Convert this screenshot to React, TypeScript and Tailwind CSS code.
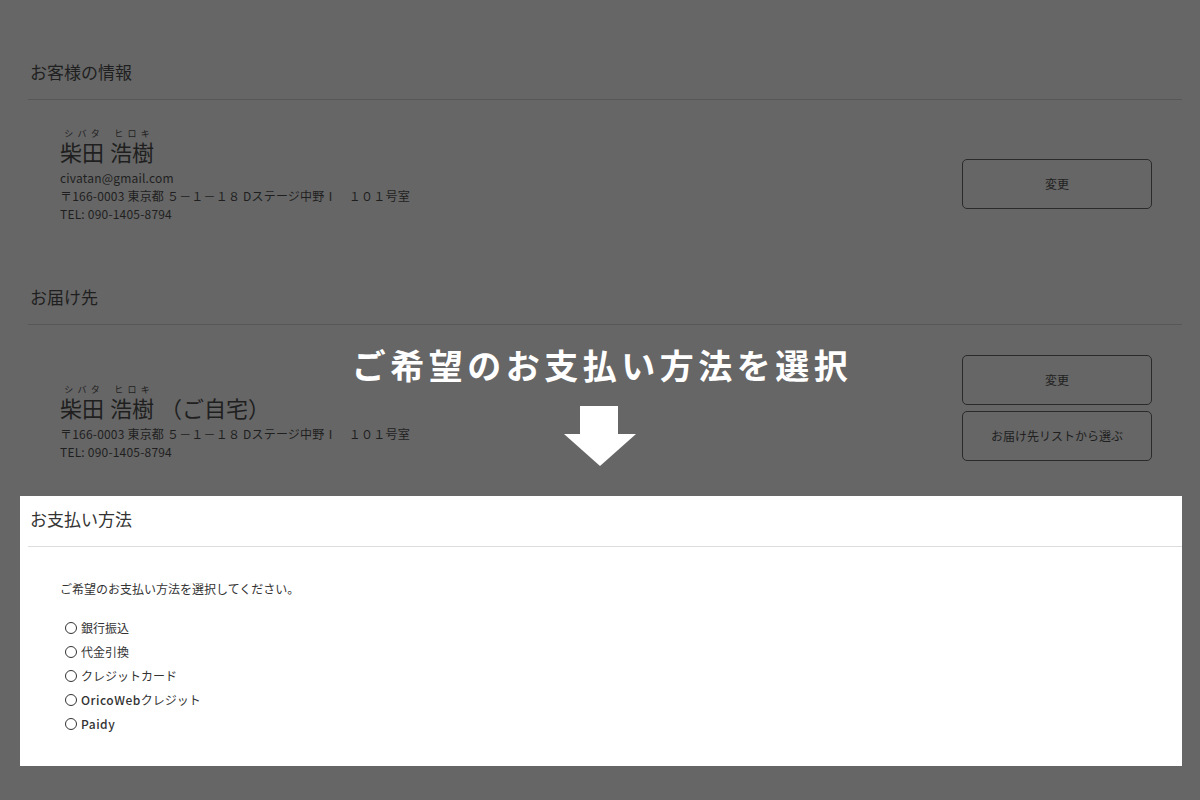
import React from "react";

const dimText = "text-[#1f1f1f]";

const Furigana = ({ kana, kanji }: { kana: string; kanji: string }) => (
  <span className="inline-flex flex-col items-stretch">
    <span className="flex justify-around px-[2px] text-[9px] leading-[9px]">
      {kana.split("").map((k, i) => (
        <span key={i}>{k}</span>
      ))}
    </span>
    <span className="text-[22px] leading-[24px] mt-[1px]">{kanji}</span>
  </span>
);

const NameLine = ({ suffix }: { suffix?: string }) => (
  <div className="flex items-end gap-[6px]">
    <Furigana kana="シバタ" kanji="柴田" />
    <Furigana kana="ヒロキ" kanji="浩樹" />
    {suffix && <span className="text-[22px] leading-[24px]">{suffix}</span>}
  </div>
);

const OutlineButton = ({ label }: { label: string }) => (
  <button className="w-[190px] h-[50px] rounded-[5px] border border-[#2a2a2a] text-[12px] text-[#1f1f1f] flex items-center justify-center">
    {label}
  </button>
);

const SectionTitle = ({ title, className = "" }: { title: string; className?: string }) => (
  <h2 className={`pl-[2px] text-[17px] leading-[24px] pb-[15px] border-b ${className}`}>{title}</h2>
);

const options = [
  { jp: "銀行振込" },
  { jp: "代金引換" },
  { jp: "クレジットカード" },
  { en: "OricoWeb", jp: "クレジット" },
  { en: "Paidy", jp: "" },
];

export default function App() {
  return (
    <div
      className="relative w-[1200px] h-[800px] overflow-hidden bg-[#666666]"
      style={{ fontFamily: '"Noto Sans CJK JP", "Noto Sans", sans-serif' }}
    >
      <div className={`ml-[28px] w-[1154px] pt-[60px] ${dimText}`}>
        {/* customer info */}
        <SectionTitle title="お客様の情報" className="border-[#575757]" />
        <div className="flex justify-between">
          <div className="pl-[32px] pt-[29px]">
            <NameLine />
            <div className="mt-[6px] text-[12px] leading-[18px] tracking-[0.2px]">
              <p>civatan@gmail.com</p>
              <p>〒166-0003 東京都 ５－１－１８ Dステージ中野Ⅰ　１０１号室</p>
              <p>TEL: 090-1405-8794</p>
            </div>
          </div>
          <div className="mt-[59px] mr-[30px]">
            <OutlineButton label="変更" />
          </div>
        </div>

        {/* delivery */}
        <div className="mt-[62px]">
          <SectionTitle title="お届け先" className="border-[#575757]" />
          <div className="flex justify-between">
            <div className="pl-[32px] pt-[60px]">
              <NameLine suffix="（ご自宅）" />
              <div className="mt-[6px] text-[12px] leading-[18px] tracking-[0.2px]">
                <p>〒166-0003 東京都 ５－１－１８ Dステージ中野Ⅰ　１０１号室</p>
                <p>TEL: 090-1405-8794</p>
              </div>
            </div>
            <div className="mt-[30px] mr-[30px] flex flex-col gap-[6px]">
              <OutlineButton label="変更" />
              <OutlineButton label="お届け先リストから選ぶ" />
            </div>
          </div>
        </div>
      </div>

      {/* highlighted payment panel */}
      <div className="mt-[35px] ml-[20px] w-[1162px] bg-white pl-[8px] pt-[11px] pb-[30px] text-[#333]">
        <SectionTitle title="お支払い方法" className="border-[#dddddd]" />
        <p className="mt-[33px] pl-[32px] text-[12px] leading-[18px]">ご希望のお支払い方法を選択してください。</p>
        <ul className="mt-[18px] pl-[37px]">
          {options.map((o, i) => (
            <li key={i} className="flex items-center h-[24px] text-[12px]">
              <span className="w-[12px] h-[12px] rounded-full border-[1.5px] border-[#333] mr-[4px]" />
              <span>
                {o.en && <span className="font-medium tracking-[0.5px]">{o.en}</span>}
                {o.jp}
              </span>
            </li>
          ))}
        </ul>
      </div>

      {/* callout */}
      <div className="absolute left-0 top-[343px] w-full pl-[4px] text-center text-white font-bold text-[34px] leading-[44px] tracking-[4.5px]">
        ご希望のお支払い方法を選択
      </div>
      <svg className="absolute left-[564px] top-[406px]" width="72" height="60" viewBox="0 0 72 60">
        <polygon points="16,0 54,0 54,28 72,28 36,60 0,28 16,28" fill="#ffffff" />
      </svg>
    </div>
  );
}
